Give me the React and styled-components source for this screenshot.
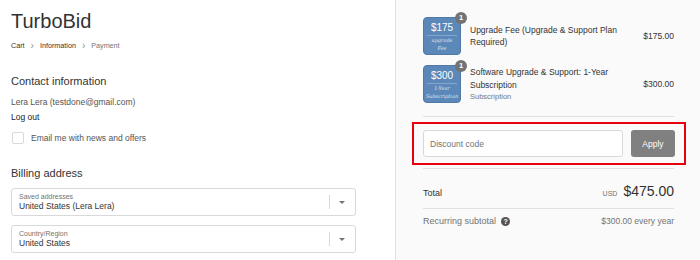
import styled, { createGlobalStyle } from "styled-components";

const GlobalStyle = createGlobalStyle`
  html, body {
    margin: 0;
    padding: 0;
    background: #fafafa;
  }
  body {
    font-family: "Liberation Sans", Arial, sans-serif;
    color: #333;
  }
  #root {
    height: 260px;
    overflow: hidden;
  }
`;

const items = [
  {
    amount: "$175",
    caption: ["upgrade", "Fee"],
    title: "Upgrade Fee (Upgrade & Support Plan Required)",
    price: "$175.00",
  },
  {
    amount: "$300",
    caption: ["1-Year", "Subscription"],
    title: "Software Upgrade & Support: 1-Year Subscription",
    sub: "Subscription",
    price: "$300.00",
  },
];

const App = () => {
  return (
    <>
      <GlobalStyle />
      <Page>
        <Main>
          <Logo>TurboBid</Logo>
          <Crumbs>
            <Crumb $dark>Cart</Crumb>
            <Chevron>›</Chevron>
            <Crumb $dark>Information</Crumb>
            <Chevron>›</Chevron>
            <Crumb>Payment</Crumb>
          </Crumbs>

          <SectionTitle $top={22}>Contact information</SectionTitle>
          <Muted>Lera Lera (testdone@gmail.com)</Muted>
          <LogOut>Log out</LogOut>
          <CheckRow>
            <Checkbox />
            <span>Email me with news and offers</span>
          </CheckRow>

          <SectionTitle $top={21}>Billing address</SectionTitle>
          <SelectBox>
            <SelectText>
              <SelectLabel>Saved addresses</SelectLabel>
              <SelectValue>United States (Lera Lera)</SelectValue>
            </SelectText>
            <SelectDivider />
            <Caret />
          </SelectBox>
          <SelectBox>
            <SelectText>
              <SelectLabel>Country/Region</SelectLabel>
              <SelectValue>United States</SelectValue>
            </SelectText>
            <SelectDivider />
            <Caret />
          </SelectBox>
        </Main>

        <Sidebar>
          <ItemList>
            {items.map((item, index) => (
              <Item key={index}>
                <Thumb>
                  <ThumbAmount>{item.amount}</ThumbAmount>
                  <ThumbCaption>
                    {item.caption.map((c) => (
                      <div key={c}>{c}</div>
                    ))}
                  </ThumbCaption>
                  <Badge>1</Badge>
                </Thumb>
                <ItemText>
                  <ItemTitle>{item.title}</ItemTitle>
                  {item.sub && <ItemSub>{item.sub}</ItemSub>}
                </ItemText>
                <ItemPrice>{item.price}</ItemPrice>
              </Item>
            ))}
          </ItemList>

          <Rule />
          <Highlight>
            <DiscountInput placeholder="Discount code" />
            <ApplyButton>Apply</ApplyButton>
          </Highlight>
          <Rule />

          <TotalRow>
            <span>Total</span>
            <TotalAmount>
              <Currency>USD</Currency>
              <BigPrice>$475.00</BigPrice>
            </TotalAmount>
          </TotalRow>
          <Rule />
          <RecurringRow>
            <RecurringLabel>
              Recurring subtotal
              <Help>?</Help>
            </RecurringLabel>
            <span>$300.00 every year</span>
          </RecurringRow>
        </Sidebar>
      </Page>
    </>
  );
};

const Page = styled.div`
  display: flex;
  height: 260px;
`;

const Main = styled.main`
  width: 384px;
  flex-shrink: 0;
  background: #fff;
  border-right: 1px solid #e1e1e1;
  padding: 9px 0 0 11px;
  box-sizing: content-box;
`;

const Logo = styled.div`
  font-size: 20px;
  line-height: 24px;
  color: #333;
`;

const Crumbs = styled.div`
  display: flex;
  align-items: center;
  gap: 5px;
  margin-top: 8px;
  font-size: 7.2px;
  line-height: 10px;
`;

const Crumb = styled.span`
  color: ${(p) => (p.$dark ? "#333" : "#737373")};
`;

const Chevron = styled.span`
  color: #919191;
  font-size: 10px;
  margin: 0 1px;
`;

const SectionTitle = styled.h2`
  margin: ${(p) => p.$top}px 0 0;
  font-size: 11px;
  line-height: 16px;
  font-weight: normal;
  color: #333;
`;

const Muted = styled.div`
  margin-top: 7px;
  font-size: 8.5px;
  line-height: 12px;
  color: #545454;
`;

const LogOut = styled.div`
  margin-top: 3px;
  font-size: 8.5px;
  line-height: 12px;
  color: #1a1a1a;
`;

const CheckRow = styled.label`
  display: flex;
  align-items: center;
  gap: 7px;
  height: 12px;
  margin-top: 9px;
  font-size: 8.5px;
  color: #545454;
`;

const Checkbox = styled.span`
  width: 10px;
  height: 10px;
  border: 1px solid #d9d9d9;
  border-radius: 2px;
  background: #fff;
  margin-left: 1px;
`;

const SelectBox = styled.div`
  display: flex;
  align-items: center;
  width: 345px;
  height: 28px;
  box-sizing: border-box;
  margin-top: 7px;
  border: 1px solid #d9d9d9;
  border-radius: 3px;
  background: #fff;
  padding: 0 0 0 7px;

  & + & {
    margin-top: 9px;
  }
`;

const SelectText = styled.div`
  flex: 1;
  display: flex;
  flex-direction: column;
`;

const SelectLabel = styled.span`
  font-size: 7px;
  line-height: 8px;
  color: #737373;
`;

const SelectValue = styled.span`
  font-size: 8.5px;
  line-height: 11px;
  color: #333;
`;

const SelectDivider = styled.span`
  width: 1px;
  height: 14px;
  background: #d9d9d9;
`;

const Caret = styled.span`
  width: 0;
  height: 0;
  margin: 0 10px 0 9px;
  border-left: 3.5px solid transparent;
  border-right: 3.5px solid transparent;
  border-top: 3.5px solid #737373;
`;

const Sidebar = styled.aside`
  flex: 1;
  background: #fafafa;
  padding: 0 26px 0 27px;
`;

const ItemList = styled.div`
  display: flex;
  flex-direction: column;
  gap: 10px;
  padding-top: 17px;
  margin-bottom: 13px;
`;

const Item = styled.div`
  display: flex;
  align-items: center;
`;

const Thumb = styled.div`
  position: relative;
  width: 38px;
  height: 38px;
  flex-shrink: 0;
  box-sizing: border-box;
  border-radius: 4px;
  background: #5b88b9;
  border: 1px solid #4f79a6;
  color: #fff;
  display: flex;
  flex-direction: column;
  align-items: center;
  padding-top: 3px;
`;

const ThumbAmount = styled.div`
  font-size: 10px;
  line-height: 13px;
  padding-bottom: 1px;
  border-bottom: 1px solid rgba(255, 255, 255, 0.25);
  width: 30px;
  text-align: center;
`;

const ThumbCaption = styled.div`
  margin-top: 1px;
  font-family: "DejaVu Serif", serif;
  font-style: italic;
  font-size: 5px;
  line-height: 7.5px;
  text-align: center;
  color: #dde6f1;
  white-space: nowrap;
`;

const Badge = styled.span`
  position: absolute;
  top: -6px;
  right: -7px;
  width: 12px;
  height: 12px;
  border-radius: 50%;
  background: #737373;
  color: #fff;
  font-size: 7.5px;
  font-weight: bold;
  line-height: 12px;
  text-align: center;
`;

const ItemText = styled.div`
  flex: 1;
  padding: 0 20px 0 9px;
`;

const ItemTitle = styled.div`
  font-size: 8.5px;
  line-height: 12.5px;
  color: #333;
`;

const ItemSub = styled.div`
  font-size: 7.5px;
  line-height: 11px;
  color: #777;
`;

const ItemPrice = styled.div`
  font-size: 8.5px;
  color: #333;
`;

const Rule = styled.div`
  height: 1px;
  background: #e1e1e1;
`;

const Highlight = styled.div`
  display: flex;
  gap: 8px;
  margin: 5px -12px 3px -11px;
  padding: 6px 9px 6px 9px;
  border: 2px solid #e8000f;
`;

const DiscountInput = styled.input`
  flex: 1;
  height: 27px;
  box-sizing: border-box;
  border: 1px solid #d9d9d9;
  border-radius: 3px;
  background: #fff;
  padding: 0 6px;
  font-family: inherit;
  font-size: 8.5px;
  outline: none;

  &::placeholder {
    color: #737373;
  }
`;

const ApplyButton = styled.button`
  width: 44px;
  height: 27px;
  border: none;
  border-radius: 3px;
  background: #808080;
  color: #fff;
  font-family: inherit;
  font-size: 8.5px;
`;

const TotalRow = styled.div`
  display: flex;
  justify-content: space-between;
  align-items: baseline;
  height: 39px;
  box-sizing: border-box;
  padding-top: 14px;
  font-size: 9px;
  color: #333;
`;

const TotalAmount = styled.div`
  display: flex;
  align-items: baseline;
  gap: 6px;
`;

const Currency = styled.span`
  font-size: 7px;
  color: #737373;
`;

const BigPrice = styled.span`
  font-size: 14px;
  line-height: 16px;
  color: #333;
`;

const RecurringRow = styled.div`
  display: flex;
  justify-content: space-between;
  align-items: center;
  padding-top: 7px;
  font-size: 8.5px;
  color: #737373;
`;

const RecurringLabel = styled.span`
  display: flex;
  align-items: center;
  gap: 5px;
  font-size: 9px;
`;

const Help = styled.span`
  width: 9px;
  height: 9px;
  border-radius: 50%;
  background: #545454;
  color: #fff;
  font-size: 7px;
  font-weight: bold;
  line-height: 9px;
  text-align: center;
`;

export default App;
